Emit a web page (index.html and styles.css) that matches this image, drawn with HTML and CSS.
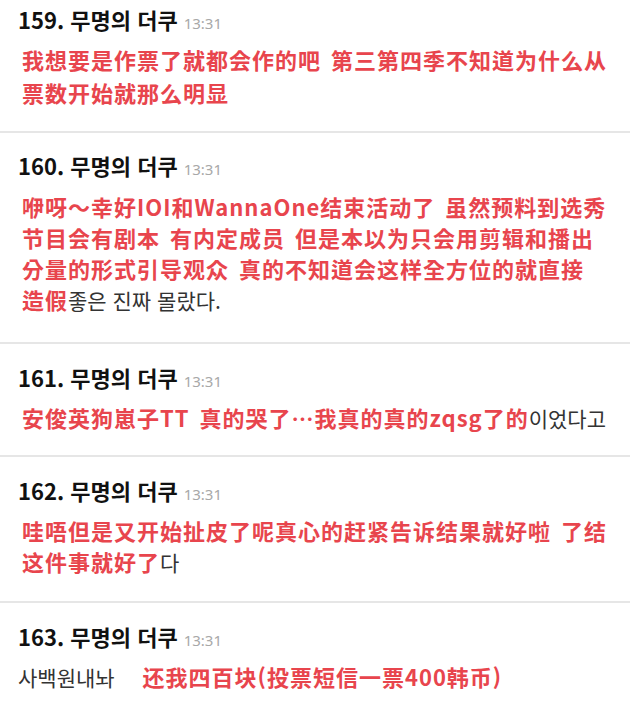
FILE: index.html
```html
<!DOCTYPE html>
<html lang="ko">
<head>
<meta charset="utf-8">
<link rel="stylesheet" href="styles.css">
</head>
<body>
<div class="list">
  <div class="item first">
    <div class="head"><span class="name">159. 무명의 더쿠</span><span class="time">13:31</span></div>
    <div class="body">
      <div class="line"><span class="red">我想要是作票了就都会作的吧</span><span class="gap"></span><span class="red">第三第四季不知道为什么从</span></div>
      <div class="line"><span class="red">票数开始就那么明显</span></div>
    </div>
  </div>
  <div class="item tall">
    <div class="head"><span class="name">160. 무명의 더쿠</span><span class="time">13:31</span></div>
    <div class="body">
      <div class="line"><span class="red">咿呀～幸好IOI和WannaOne结束活动了</span><span class="gap"></span><span class="red">虽然预料到选秀</span></div>
      <div class="line"><span class="red">节目会有剧本</span><span class="gap"></span><span class="red">有内定成员</span><span class="gap"></span><span class="red">但是本以为只会用剪辑和播出</span></div>
      <div class="line"><span class="red">分量的形式引导观众</span><span class="gap"></span><span class="red">真的不知道会这样全方位的就直接</span></div>
      <div class="line"><span class="red">造假</span><span class="ko">좋은 진짜 몰랐다.</span></div>
    </div>
  </div>
  <div class="item">
    <div class="head"><span class="name">161. 무명의 더쿠</span><span class="time">13:31</span></div>
    <div class="body">
      <div class="line"><span class="red">安俊英狗崽子TT</span><span class="gap"></span><span class="red">真的哭了…我真的真的zqsg了的</span><span class="ko">이었다고</span></div>
    </div>
  </div>
  <div class="item mid">
    <div class="head"><span class="name">162. 무명의 더쿠</span><span class="time">13:31</span></div>
    <div class="body">
      <div class="line"><span class="red">哇唔但是又开始扯皮了呢真心的赶紧告诉结果就好啦</span><span class="gap"></span><span class="red">了结</span></div>
      <div class="line"><span class="red">这件事就好了</span><span class="ko">다</span></div>
    </div>
  </div>
  <div class="item last">
    <div class="head"><span class="name">163. 무명의 더쿠</span><span class="time">13:31</span></div>
    <div class="body">
      <div class="line"><span class="ko">사백원내놔</span><span class="wide"></span><span class="red">还我四百块(投票短信一票400韩币)</span></div>
    </div>
  </div>
</div>
</body>
</html>
```
FILE: styles.css
```css
html, body {
  margin: 0;
  padding: 0;
  background: #ffffff;
}
body {
  width: 630px;
  height: 711px;
  overflow: hidden;
  font-family: "Noto Sans CJK KR", "Noto Sans CJK SC", sans-serif;
}
.list {
  display: flex;
  flex-direction: column;
}
.item {
  padding: 18px 18px 22px 18px;
  border-bottom: 2px solid #e6e6e6;
  display: flex;
  flex-direction: column;
  gap: 10px;
}
.item.first {
  padding-top: 4px;
  padding-bottom: 22px;
  gap: 9px;
}
.item.tall {
  padding-top: 17px;
  padding-bottom: 27px;
  gap: 11px;
}
.item.mid {
  padding-bottom: 24px;
}
.item.last {
  border-bottom: none;
}
.head {
  display: flex;
  align-items: baseline;
  height: 30px;
  line-height: 30px;
}
.name {
  font-size: 22px;
  font-weight: 700;
  color: #111111;
}
.time {
  margin-left: 6px;
  font-size: 15px;
  color: #a8a8a8;
  font-family: "Noto Sans", "Noto Sans CJK KR", sans-serif;
}
.body {
  display: flex;
  flex-direction: column;
  padding-left: 4px;
}
.first .body .line {
  height: 33px;
  line-height: 33px;
}
.line {
  display: flex;
  align-items: baseline;
  height: 31px;
  line-height: 31px;
  white-space: nowrap;
}
.red {
  font-family: "Noto Sans CJK SC", sans-serif;
  font-size: 22px;
  font-weight: 700;
  letter-spacing: 1px;
  color: #e8454d;
}
.gap {
  width: 10px;
}
.wide {
  width: 28px;
}
.ko {
  font-family: "Noto Sans CJK KR", sans-serif;
  font-size: 21px;
  font-weight: 400;
  color: #333333;
}
.last .ko {
  margin-left: -4px;
}
```
